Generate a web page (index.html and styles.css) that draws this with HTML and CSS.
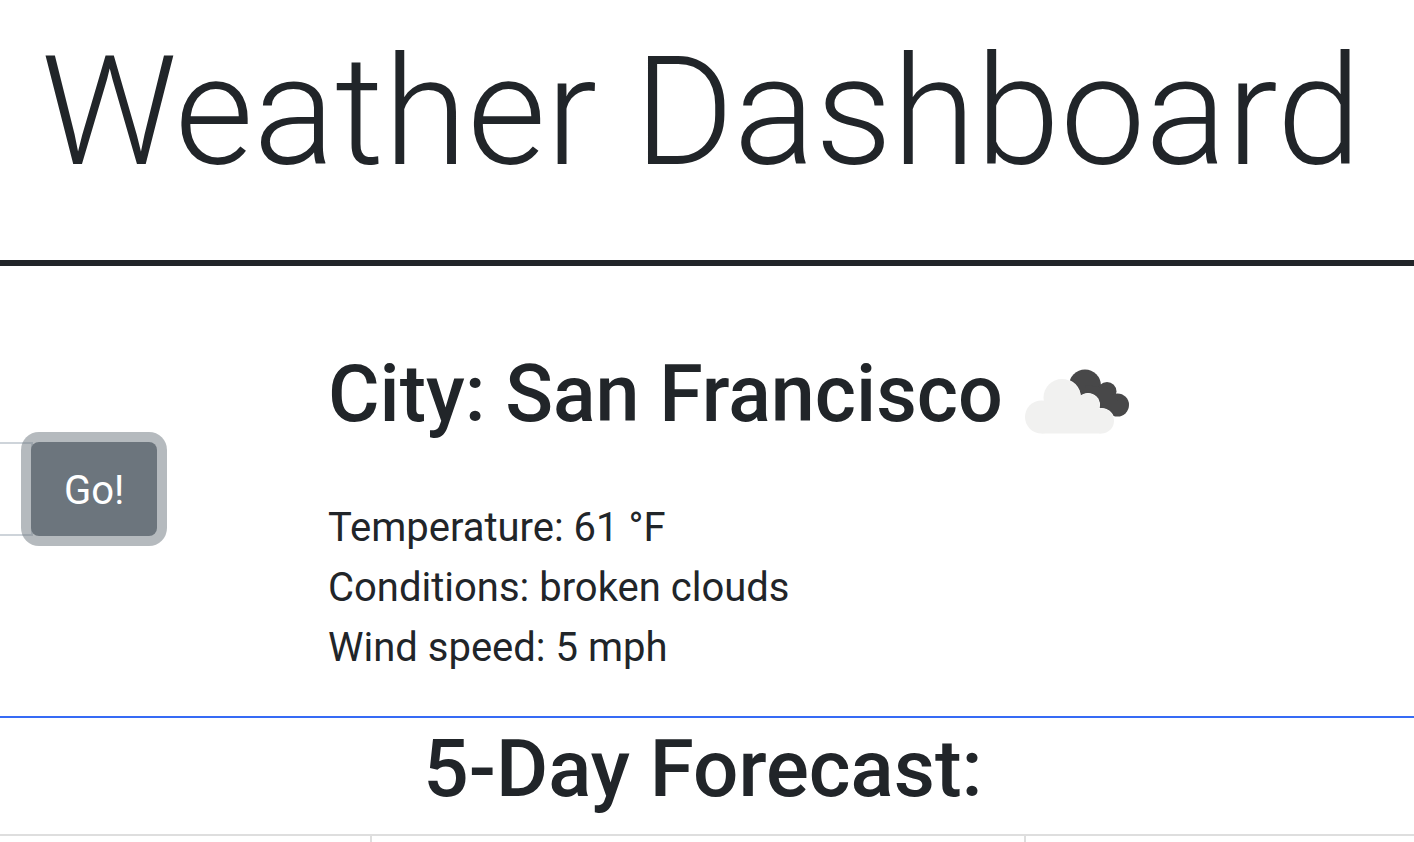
FILE: index.html
```html
<!DOCTYPE html>
<html lang="en">
<head>
<meta charset="utf-8">
<meta name="viewport" content="width=device-width, initial-scale=1">
<title>Weather Dashboard</title>
<link rel="stylesheet" href="styles.css">
</head>
<body>
<header class="masthead"><h1 class="title">Weather Dashboard</h1></header>
<main>
<section class="overview">
<form class="search">
<input class="search-input" type="text" aria-label="City">
<button class="search-button" type="button">Go!</button>
</form>
<article class="current">
<h2 class="city">City: San Francisco
<svg class="clouds" viewBox="0 0 106 68" aria-hidden="true">
<g class="cloud-dark"><circle cx="61" cy="17.5" r="16"/><circle cx="83" cy="23.5" r="9.5"/><circle cx="93.5" cy="37" r="11.5"/><path d="M61 17L83 20L98 38L90 48L65 35Z"/></g>
<g class="cloud-gap"><circle cx="38" cy="29.5" r="19"/><circle cx="64" cy="37" r="12"/><circle cx="77.5" cy="53" r="13"/><path d="M64 37L76 40V60H40V36Z"/></g>
<g class="cloud-light"><circle cx="17.5" cy="49" r="16.5"/><circle cx="38" cy="29.5" r="18.5"/><circle cx="64" cy="37" r="11.5"/><circle cx="77.5" cy="53" r="12.5"/><path d="M17.5 65.5V45L38 29.5L64 37L77.5 53V65.5Z"/></g>
</svg></h2>
<p class="detail">Temperature: 61 °F</p>
<p class="detail">Conditions: broken clouds</p>
<p class="detail">Wind speed: 5 mph</p>
</article>
</section>
<section class="forecast">
<h2 class="forecast-title">5-Day Forecast:</h2>
<div class="days"><div class="day"></div><div class="day"></div><div class="day"></div></div>
</section>
</main>
</body>
</html>
```
FILE: styles.css
```css
* { box-sizing: border-box; }
body { margin: 0; background: #fff; color: #212529; font-family: Roboto, "Liberation Sans", sans-serif; font-size: 40px; line-height: 60px; overflow: hidden; }
h1, h2, p { margin: 0; }
.masthead { padding: 16px 12px 52px 0; border-bottom: 6px solid #212529; text-align: center; }
.title { font-size: 152px; line-height: 192px; font-weight: 300; white-space: nowrap; }
.overview { display: grid; grid-template-columns: 328px 1fr; padding: 80px 0 38px; border-bottom: 2px solid #366bf5; }
.search { display: flex; align-self: start; margin-top: 96px; }
.search-input { width: 33px; height: 94px; border: 2px solid #ced4da; border-left: 0; border-radius: 0; padding: 0; margin-right: -2px; }
.search-button { position: relative; height: 94px; padding: 4px 33px 0; border: 0; border-radius: 8px; background: #6c757d; color: #fff; font: inherit; box-shadow: 0 0 0 10px rgba(108, 117, 125, 0.5); }
.city { display: flex; align-items: center; gap: 21px; font-size: 79px; line-height: 96px; font-weight: 500; margin-bottom: 56px; white-space: nowrap; }
.clouds { width: 106px; height: 68px; margin-top: 16px; }
.cloud-dark { fill: #484849; }
.cloud-gap { fill: #fff; }
.cloud-light { fill: #f1f1f0; }
.forecast-title { padding: 5px 8px 19px 0; font-size: 80px; line-height: 92px; font-weight: 500; text-align: center; }
.days { display: grid; grid-template-columns: 372px 654px 1fr; border-top: 2px solid #dedede; }
.day { height: 40px; border-right: 2px solid #dedede; }
.day:last-child { border-right: 0; }
```
